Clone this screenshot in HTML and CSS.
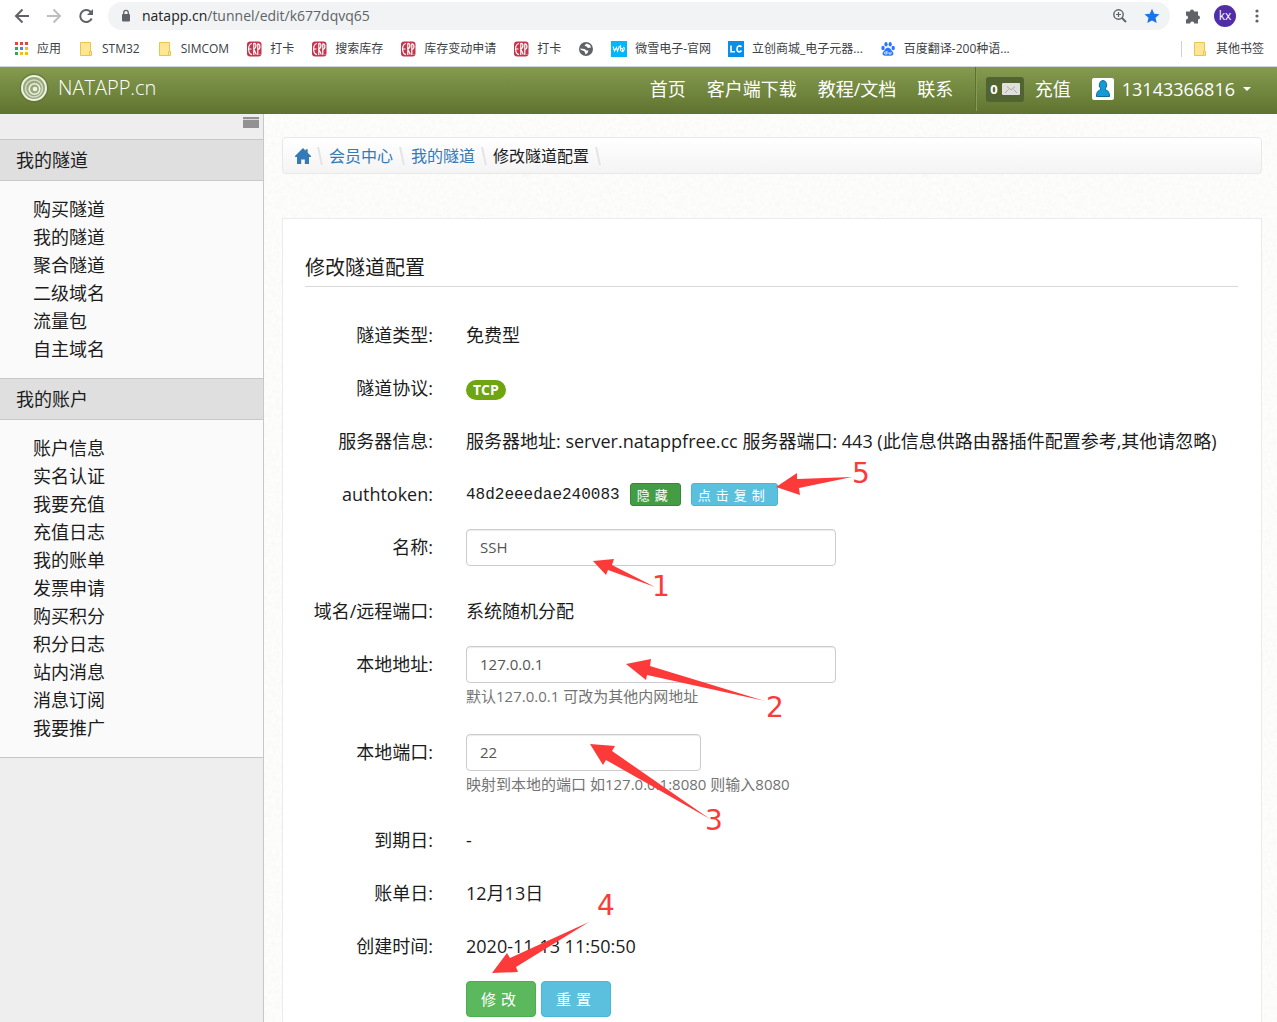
FILE: index.html
```html
<!DOCTYPE html>
<html lang="zh-CN">
<head>
<meta charset="utf-8">
<meta name="viewport" content="width=device-width, initial-scale=1">
<title>修改隧道配置 - NATAPP.cn</title>
<link rel="stylesheet" href="styles.css">
</head>
<body>
<svg class="sprite" aria-hidden="true">
  <symbol id="folder" viewBox="0 0 16 16"><path d="M2.500 1.500h10v10l-1 3h-9z" fill="#ffe694" stroke="#e8c54d"/><path d="M13.500 10.500v4h-2v-3.500a1 1 0 0 1 2 0z" fill="#ffe694" stroke="#e8c54d"/></symbol>
  <symbol id="erp" viewBox="0 0 16 16"><rect x="1" y="0.500" width="14.500" height="15" rx="3" fill="#c3364b"/><path d="M6 2.500C3.500 3 2.600 5 2.600 8s.9 5 3.400 5.700M3 8h2.500M7.800 14V2.500c2.800-.8 3 4.600 0 5.500l2.500 5.500M11.800 14V3c2.800-.5 2.800 5 .2 5.500M14 13.500v.5" fill="none" stroke="#fff" stroke-width="1.200"/></symbol>
</svg>
<div class="page">
  <div class="browser">
    <div class="toolbar">
      <button class="tool" aria-label="后退"><svg width="16" height="16" viewBox="0 0 16 16"><path d="M15 8H2M8.500 1.500L2 8l6.500 6.500" fill="none" stroke="#5f6368" stroke-width="2"/></svg></button>
      <button class="tool" aria-label="前进"><svg width="16" height="16" viewBox="0 0 16 16"><path d="M1 8h13M7.500 1.500L14 8l-6.500 6.500" fill="none" stroke="#bcbec1" stroke-width="2"/></svg></button>
      <button class="tool" aria-label="刷新"><svg width="16" height="16" viewBox="0 0 16 16"><path d="M13.700 10.500A6 6 0 1 1 12.500 3.800L14 5.300" fill="none" stroke="#5f6368" stroke-width="2"/><path d="M15 1v6H9z" fill="#5f6368"/></svg></button>
      <div class="address">
        <svg width="12" height="14" viewBox="0 0 12 14"><rect x="2" y="5" width="8" height="7.500" rx="1" fill="#5f6368"/><path d="M3.700 5.500V3.700a2.300 2.300 0 0 1 4.600 0v1.800" fill="none" stroke="#5f6368" stroke-width="1.300"/></svg>
        <span class="url"><b>natapp.cn</b>/tunnel/edit/k677dqvq65</span>
        <svg width="16" height="16" viewBox="0 0 16 16"><path d="M9.600 9.600L14 14" stroke="#5f6368" stroke-width="2"/><circle cx="6.500" cy="6.500" r="4.700" fill="none" stroke="#5f6368" stroke-width="1.400"/><path d="M4 6.500h5M6.500 4v5" stroke="#5f6368" stroke-width="1.200"/></svg>
        <svg width="16" height="16" viewBox="0 0 16 16"><path d="M8 .8l2.200 4.900 5.300.5-4 3.600 1.200 5.300L8 12.400l-4.700 2.700 1.200-5.300-4-3.600 5.300-.5z" fill="#1a73e8"/></svg>
      </div>
      <button class="tool" aria-label="扩展程序"><svg width="16" height="16" viewBox="0 0 16 16"><path d="M1 3.500h4a2 2 0 1 1 4 0h4v4a2 2 0 1 1 0 4v4H9.200a2 2 0 1 0-4 0H1v-4a2 2 0 1 0 0-4z" fill="#5f6368"/></svg></button>
      <button class="tool" aria-label="用户"><span class="profile">kx</span></button>
      <button class="tool" aria-label="菜单"><svg width="16" height="16" viewBox="0 0 16 16"><g fill="#5f6368"><circle cx="8" cy="3" r="1.600"/><circle cx="8" cy="8" r="1.600"/><circle cx="8" cy="13" r="1.600"/></g></svg></button>
    </div>
    <div class="bookmarks">
      <a href="#"><svg viewBox="0 0 16 16"><path d="M2 1h3v3H2zM7 1h3v3H7zM12 1h3v3h-3z" fill="#ea4335"/><path d="M2 6h3v3H2z" fill="#34a853"/><path d="M7 6h3v3H7z" fill="#4285f4"/><path d="M12 6h3v3h-3zM7 11h3v3H7zM12 11h3v3h-3z" fill="#fbbc05"/><path d="M2 11h3v3H2z" fill="#34a853"/></svg>应用</a>
      <a href="#"><svg><use href="#folder"/></svg>STM32</a>
      <a href="#"><svg><use href="#folder"/></svg>SIMCOM</a>
      <a href="#"><svg><use href="#erp"/></svg>打卡</a>
      <a href="#"><svg><use href="#erp"/></svg>搜索库存</a>
      <a href="#"><svg><use href="#erp"/></svg>库存变动申请</a>
      <a href="#"><svg><use href="#erp"/></svg>打卡</a>
      <a href="#" aria-label="网页"><svg viewBox="0 0 16 16"><circle cx="8" cy="8" r="7" fill="#5f6368"/><path d="M2 7.500l4.500.5 2 1.500h2l-1 2.500-2 1.500-.5-2-1-1.500-3-1zM8.500 2.500L6.500 4.500l2 1 1.500 1.500 3-.5-1-2.500z" fill="#fff"/></svg></a>
      <a href="#"><svg viewBox="0 0 16 16"><path d="M0 0h16v16H0z" fill="#00b7ff"/><path d="M2 5.500l1.500 4.500L5.500 6.500 6.500 10l2-5M9.500 4v6M9.500 8c2-2 3 0 1 3M12.500 6c1.300 1 1 3-1 5" fill="none" stroke="#fff" stroke-width="1.100"/></svg>微雪电子-官网</a>
      <a href="#"><svg viewBox="0 0 16 16"><path d="M0 0h16v16H0z" fill="#0a8fe9"/><path d="M3 4.500v6.200h4M13.500 6c-1.300-1.800-4.500-1.500-4.500 2s3.200 3.500 4.500 1.500" fill="none" stroke="#fff" stroke-width="1.600"/></svg>立创商城_电子元器...</a>
      <a href="#"><svg viewBox="0 0 16 16"><g fill="#2878ff"><ellipse cx="3" cy="7" rx="1.700" ry="2.200"/><ellipse cx="6" cy="3.300" rx="1.600" ry="2.200"/><ellipse cx="10.200" cy="3.300" rx="1.600" ry="2.200"/><ellipse cx="13.200" cy="7" rx="1.700" ry="2.200"/><path d="M8 6.500c2 0 3 2.300 4.500 4s1.300 4.200-1.500 4.200c-2 0-4 0-6 0-2.800 0-3-2.500-1.500-4.200S6 6.500 8 6.500z"/></g><path d="M7 10v3H5.500a1 1 0 0 1 0-2H7M9 11v2h2v-2" fill="none" stroke="#fff" stroke-width=".8"/></svg>百度翻译-200种语...</a>
      <a class="other" href="#"><svg><use href="#folder"/></svg>其他书签</a>
    </div>
  </div>

  <header class="site-header">
    <a class="brand" href="#"><svg width="30" height="30" viewBox="0 0 30 30"><circle cx="15" cy="15" r="14.500" fill="#5f7334" opacity=".6"/><circle cx="15" cy="15" r="12" fill="#9aa97b"/><g fill="none" stroke="#eef2e4"><circle cx="15" cy="15" r="12" stroke-width="2"/><circle cx="15" cy="15.500" r="8.500" stroke-width="1.500" opacity=".7"/><circle cx="15.500" cy="16" r="5.300" stroke-width="1.600"/></g><circle cx="16" cy="16" r="2.300" fill="#eef2e4"/></svg>NATAPP.cn</a>
    <nav class="top-nav">
      <a href="#">首页</a><a href="#">客户端下载</a><a href="#">教程/文档</a><a href="#">联系</a>
    </nav>
    <div class="account">
      <a class="mail" href="#">0<svg width="18" height="12" viewBox="0 0 18 12"><rect width="18" height="12" rx="1" fill="#dfdfdb"/><path d="M5 3.500l4 3.500 4-3.500M3 10l3.500-3.500M15 10l-3.500-3.500" fill="none" stroke="#aaa"/></svg></a>
      <a href="#">充值</a>
      <a class="user" href="#"><svg width="22" height="22" viewBox="0 0 22 22"><rect width="22" height="22" rx="2" fill="#fff"/><path d="M11 2.500a4 4.500 0 0 1 2.500 7.800v1.500c2.500.8 4 2.200 4 6.700h-13c0-4.500 1.500-5.900 4-6.700v-1.500A4 4.500 0 0 1 11 2.500z" fill="#119bd8" stroke="#17698e"/></svg>13143366816<span class="caret"></span></a>
    </div>
  </header>

  <div class="body">
    <aside class="sidebar">
      <div class="toggle"><button aria-label="折叠菜单"></button></div>
      <section>
        <h2>我的隧道</h2>
        <ul>
          <li><a href="#">购买隧道</a></li><li><a href="#">我的隧道</a></li><li><a href="#">聚合隧道</a></li><li><a href="#">二级域名</a></li><li><a href="#">流量包</a></li><li><a href="#">自主域名</a></li>
        </ul>
      </section>
      <section>
        <h2>我的账户</h2>
        <ul>
          <li><a href="#">账户信息</a></li><li><a href="#">实名认证</a></li><li><a href="#">我要充值</a></li><li><a href="#">充值日志</a></li><li><a href="#">我的账单</a></li><li><a href="#">发票申请</a></li><li><a href="#">购买积分</a></li><li><a href="#">积分日志</a></li><li><a href="#">站内消息</a></li><li><a href="#">消息订阅</a></li><li><a href="#">我要推广</a></li>
        </ul>
      </section>
    </aside>

    <main class="main">
      <nav class="breadcrumb">
        <a href="#" aria-label="首页"><svg width="16" height="16" viewBox="0 0 16 16"><path d="M8 0l2.700 2.700V1.200h2v3.500L16 8v1h-2v7H9.800v-4.500H6.200V16H2V9H0V8z" fill="#337ab7"/></svg></a>
        <a href="#">会员中心</a>
        <a href="#">我的隧道</a>
        <span>修改隧道配置</span>
      </nav>
      <form class="panel">
        <h1>修改隧道配置</h1>
        <div class="row"><span class="label">隧道类型:</span><div class="value">免费型</div></div>
        <div class="row"><span class="label">隧道协议:</span><div class="value"><span class="badge">TCP</span></div></div>
        <div class="row"><span class="label">服务器信息:</span><div class="value">服务器地址: server.natappfree.cc 服务器端口: 443 (此信息供路由器插件配置参考,其他请忽略)</div></div>
        <div class="row"><span class="label">authtoken:</span><div class="value token"><code>48d2eeedae240083</code><button type="button" class="btn small dark">隐藏</button><button type="button" class="btn small info">点击复制</button></div></div>
        <div class="row named"><label class="label" for="name">名称:</label><div class="value"><input id="name" type="text" value="SSH"></div></div>
        <div class="row"><span class="label">域名/远程端口:</span><div class="value">系统随机分配</div></div>
        <div class="row"><label class="label" for="addr">本地地址:</label><div class="value"><input id="addr" type="text" value="127.0.0.1"><p class="hint">默认127.0.0.1 可改为其他内网地址</p></div></div>
        <div class="row"><label class="label" for="port">本地端口:</label><div class="value"><input id="port" class="short" type="text" value="22"><p class="hint">映射到本地的端口 如127.0.0.1:8080 则输入8080</p></div></div>
        <div class="row"><span class="label">到期日:</span><div class="value">-</div></div>
        <div class="row"><span class="label">账单日:</span><div class="value">12月13日</div></div>
        <div class="row"><span class="label">创建时间:</span><div class="value">2020-11-13 11:50:50</div></div>
        <div class="row actions"><span></span><div class="value token"><button type="button" class="btn success">修改</button><button type="reset" class="btn info">重置</button></div></div>
      </form>
    </main>
  </div>

  <svg class="annotations" width="420" height="540" viewBox="470 450 420 540">
    <g fill="#fc3a3a">
      <path d="M776 487l21-14v6l55-2-53 11 1 7z"/>
      <path d="M593 561l21-2-2 6 43 22-47-17-2 5z"/>
      <path d="M626 664l25-5-1 7 115 35-118-26-1 5z"/>
      <path d="M590 744l25 2-3 5 98 68-104-59-3 5z"/>
      <path d="M492 973l15-20 3 5 79-36-73 45 2 5z"/>
      <text x="852" y="483">5</text>
      <text x="652" y="596">1</text>
      <text x="766" y="717">2</text>
      <text x="705" y="830">3</text>
      <text x="597" y="915">4</text>
    </g>
  </svg>
</div>
</body>
</html>
```
FILE: styles.css
```css
* { box-sizing: border-box; }
body {
  margin: 0;
  font: 18px/28px "Open Sans", "Noto Sans CJK SC", sans-serif;
  color: #1c1c1c;
}
a { color: inherit; text-decoration: none; }
button { font: inherit; border: 0; padding: 0; background: none; cursor: pointer; }
svg { flex: none; }
.sprite { position: absolute; width: 0; height: 0; }
.page { position: relative; display: flex; flex-direction: column; min-height: 100vh; }

/* Browser chrome */
.browser { background: #fff; border-bottom: 1px solid #d5d7da; }
.toolbar { display: flex; align-items: center; height: 32px; padding: 0 4px 0 6px; }
.tool { width: 32px; height: 32px; display: flex; align-items: center; justify-content: center; }
.address {
  flex: 1; display: flex; align-items: center; gap: 16px; height: 28px;
  margin: 0 7px 0 6px; padding: 0 10px 0 12px; border-radius: 14px; background: #f1f3f4;
}
.url { flex: 1; margin-left: -6px; font-size: 14px; color: #5f6368; }
.url b { font-weight: 400; color: #202124; }
.profile { width: 22px; height: 22px; border-radius: 50%; background: #512da8; color: #fff; font-size: 12px; line-height: 21px; text-align: center; }
.bookmarks { display: flex; align-items: center; gap: 17px; height: 34px; padding: 0 13px; font-size: 12px; line-height: 16px; color: #3c4043; white-space: nowrap; }
.bookmarks a { display: flex; align-items: center; gap: 8px; }
.bookmarks svg { width: 16px; height: 16px; }
.bookmarks .other { margin-left: auto; padding-left: 10px; border-left: 1px solid #ced0d3; }

/* Site header */
.site-header {
  display: flex; align-items: center; height: 47px; padding: 0 26px 3px 19px;
  background: linear-gradient(#859b4f, #5f732f); color: #fff; white-space: nowrap;
}
.brand { display: flex; align-items: center; gap: 9px; margin-right: auto; font-size: 20px; font-weight: 300; padding-bottom: 3px; }
.top-nav { display: flex; gap: 21px; }
.account { display: flex; align-items: center; gap: 11px; height: 44px; margin-left: 22px; padding-left: 10px; border-left: 1px solid #5d722e; box-shadow: inset 1px 0 #869c53; }
.mail { display: flex; align-items: center; gap: 4px; height: 25px; padding: 0 4px; border-radius: 3px; background: #526332; font-size: 13px; font-weight: 700; }
.user { display: flex; align-items: center; gap: 8px; margin-left: 10px; }
.caret { border: 4px solid transparent; border-top-color: #fff; border-bottom: 0; }

.body { flex: 1; display: grid; grid-template-columns: 264px 1fr; }

/* Sidebar */
.sidebar { background: #eee; border-right: 1px solid #c8c8c8; }
.toggle { display: flex; justify-content: flex-end; height: 25px; padding: 3px 4px; }
.toggle button { width: 16px; height: 11px; background: linear-gradient(#929292 2px, #d8d8d8 2px, #d8d8d8 3px, #929292 3px); }
.sidebar section { border-bottom: 1px solid #c8c8c8; }
.sidebar h2 {
  margin: 0; height: 42px; padding-left: 16px; font-size: 18px; line-height: 40px; font-weight: 400;
  background: #dfdfdf; border: solid #c8c8c8; border-width: 1px 0;
}
.sidebar section + section h2 { border-top: 0; height: 41px; }
.sidebar ul { list-style: none; margin: 0; padding: 14px 0 15px 33px; background: #fafafa; }

/* Content */
.main {
  display: flex; flex-direction: column; padding: 23px 15px 0 18px; background-color: #fdfdfb;
  background-image: url("data:image/svg+xml,%3Csvg xmlns='http://www.w3.org/2000/svg' width='400' height='400'%3E%3Cfilter id='n'%3E%3CfeTurbulence type='fractalNoise' baseFrequency='.25' numOctaves='3' stitchTiles='stitch'/%3E%3CfeColorMatrix values='0 0 0 0 .5 0 0 0 0 .5 0 0 0 0 .48 0 0 0 .12 -.04'/%3E%3C/filter%3E%3Crect width='400' height='400' filter='url(%23n)'/%3E%3C/svg%3E");
}
.breadcrumb {
  display: flex; align-items: center; height: 37px; padding: 0 12px; border: 1px solid #e8e8e8; border-radius: 4px;
  background: linear-gradient(#fff, #f4f4f4); font-size: 16px;
}
.breadcrumb a { color: #337ab7; }
.breadcrumb > * { display: flex; align-items: center; }
.breadcrumb > *::after { content: ""; width: 2px; height: 18px; margin: 0 8px; background: #e4e4e4; transform: skewX(12deg); }
.panel { flex: 1; margin-top: 44px; padding: 35px 23px 0 22px; background: #fff; border: 1px solid #ebebeb; border-bottom: 0; }
.panel h1 { margin: 0 0 30px; padding-bottom: 4px; border-bottom: 1px solid #d9d9d9; font-size: 20px; font-weight: 400; }
.row { display: grid; grid-template-columns: 128px 1fr; column-gap: 33px; margin-bottom: 16px; }
.label { text-align: right; line-height: 37px; }
.value { line-height: 37px; }
.named { margin-bottom: 27px; }
.actions { margin-bottom: 0; }
.badge { display: inline-block; height: 20px; padding: 0 7px; border-radius: 10px; background: #6fa513; color: #fff; font-size: 14px; line-height: 20px; font-weight: 700; vertical-align: middle; }
.token { display: flex; align-items: center; gap: 10px; }
.actions .token { gap: 5px; }
code { font: 16px/24px "Liberation Mono", monospace; }
.value input {
  display: block; width: 100%; max-width: 370px; height: 37px; padding: 0 13px; border: 1px solid #ccc; border-radius: 4px;
  background: #fff; box-shadow: inset 0 1px 1px rgba(0, 0, 0, .08); font: inherit; font-size: 15px; color: #555;
}
.value input.short { max-width: 235px; }
.hint { margin: 0; padding-bottom: 9px; font-size: 15px; line-height: 26px; color: #737373; }
.btn { height: 36px; padding: 0 14px; border: 1px solid; border-radius: 4px; color: #fff; font-size: 15px; line-height: 20px; letter-spacing: 5px; }
.btn.small { height: 23px; padding: 0 7px 0 6px; border-radius: 3px; font-size: 13px; }
.success { background: #5cb85c; border-color: #4cae4c; }
.dark { background: #449d44; border-color: #398439; }
.info { background: #5bc0de; border-color: #46b8da; }

/* Numbered arrows floating over the form */
.annotations { position: absolute; left: 470px; top: 450px; pointer-events: none; }
.annotations text { font: 28px "DejaVu Sans", sans-serif; }
```
